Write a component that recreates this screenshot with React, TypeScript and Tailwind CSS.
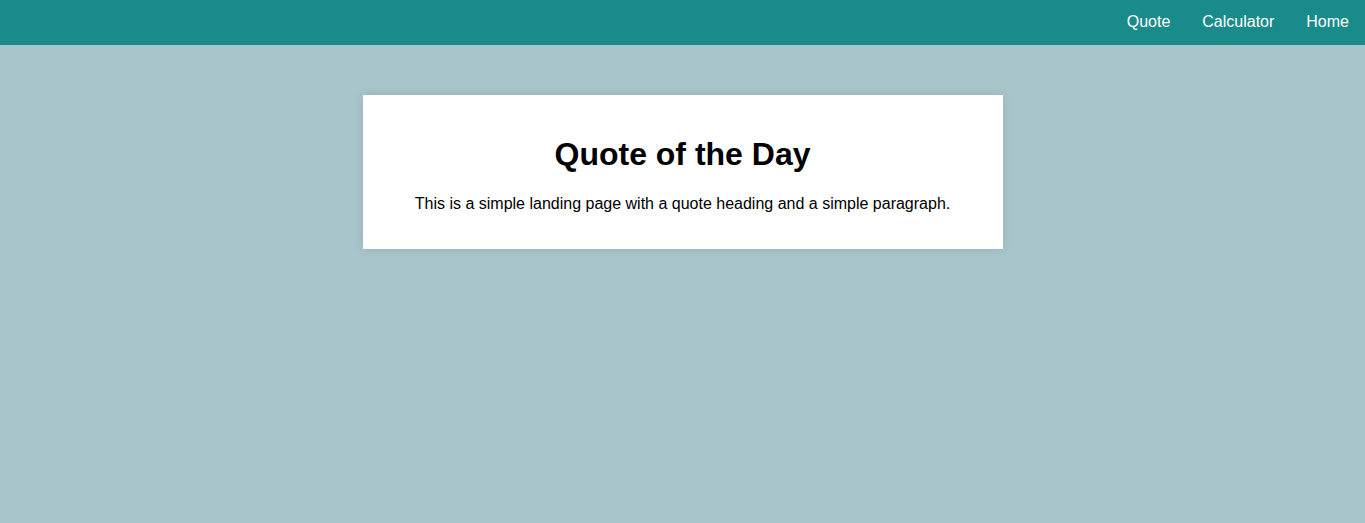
import React from "react";

const links = ["Quote", "Calculator", "Home"];

export default function App() {
  return (
    <div className="min-h-screen bg-[#a8c5cb] font-['Liberation_Sans',Arial,sans-serif] text-black">
      {/* NAV */}
      <nav className="flex h-[45px] justify-end bg-[#198b8a]">
        {links.map((l) => (
          <a key={l} href="#" className="px-4 pt-[13px] text-base leading-[18.4px] text-white">
            {l}
          </a>
        ))}
      </nav>

      {/* CARD */}
      <div className="mx-auto mt-[50px] w-[640px] bg-white px-5 py-5 text-center shadow-[0_0_10px_rgba(0,0,0,0.1)]">
        <h1 className="my-[21.44px] text-[32px] font-bold leading-[36.8px]">Quote of the Day</h1>
        <p className="my-4 text-base leading-[18.4px]">
          This is a simple landing page with a quote heading and a simple paragraph.
        </p>
      </div>
    </div>
  );
}
